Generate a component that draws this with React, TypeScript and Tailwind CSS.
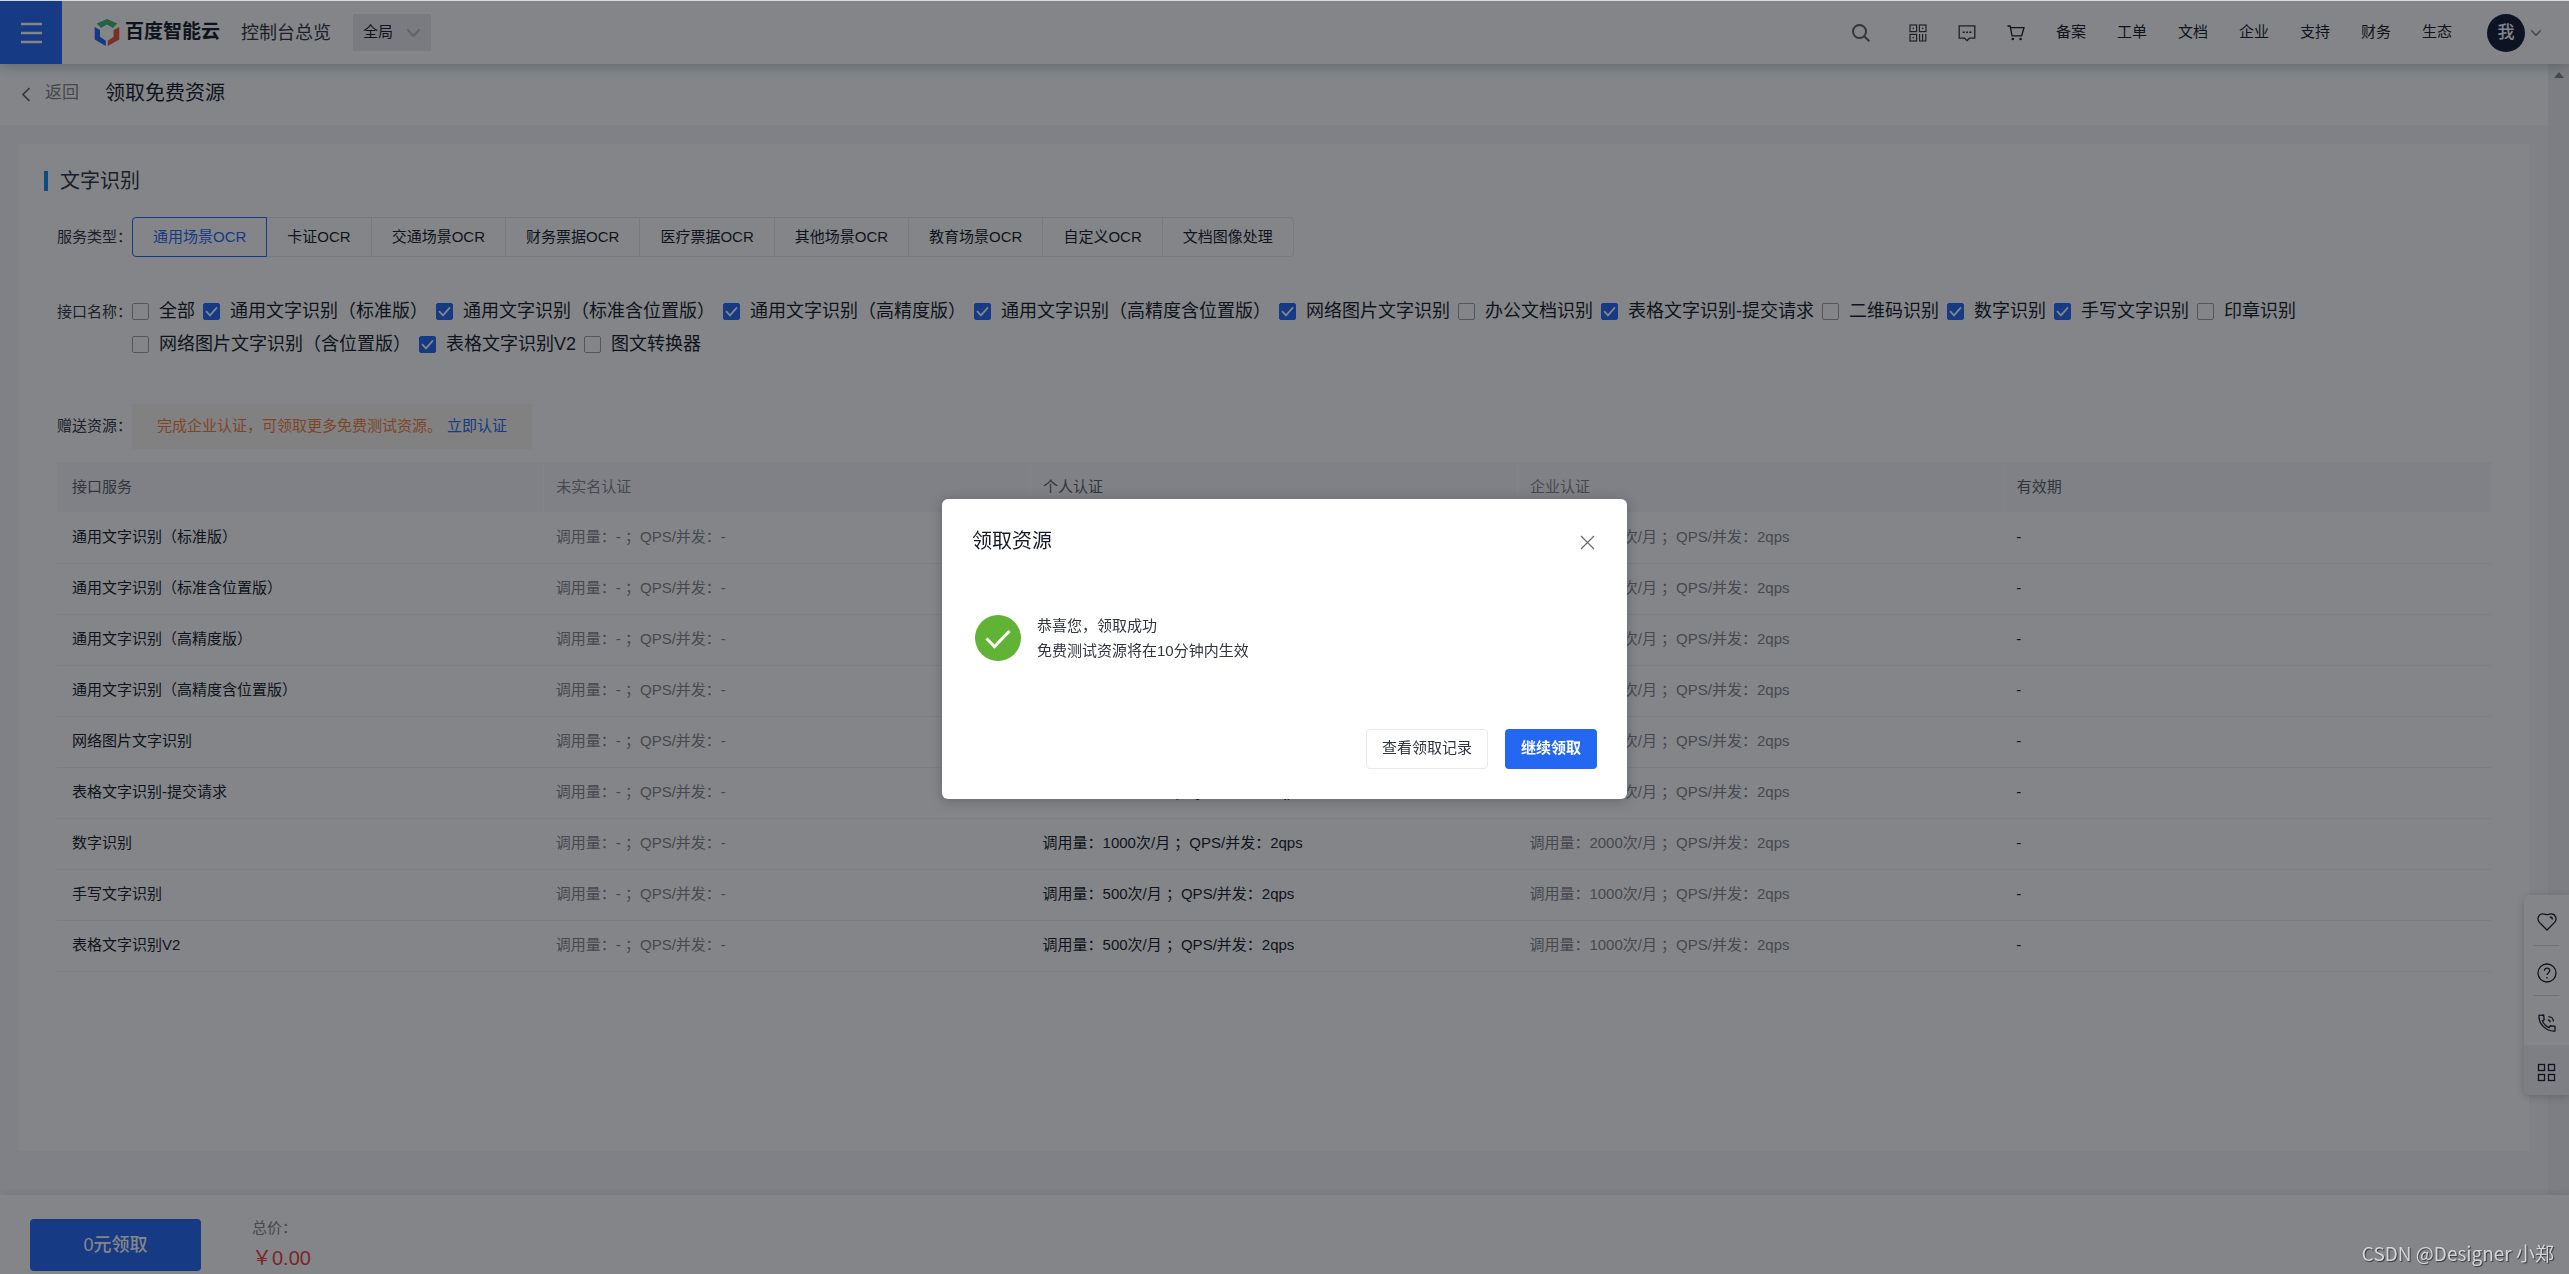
import { useState } from "react";

const navLinks = ["备案", "工单", "文档", "企业", "支持", "财务", "生态"];

const serviceTypes = [
  "通用场景OCR",
  "卡证OCR",
  "交通场景OCR",
  "财务票据OCR",
  "医疗票据OCR",
  "其他场景OCR",
  "教育场景OCR",
  "自定义OCR",
  "文档图像处理",
];

const apiOptions = [
  { name: "全部", checked: false },
  { name: "通用文字识别（标准版）", checked: true },
  { name: "通用文字识别（标准含位置版）", checked: true },
  { name: "通用文字识别（高精度版）", checked: true },
  { name: "通用文字识别（高精度含位置版）", checked: true },
  { name: "网络图片文字识别", checked: true },
  { name: "办公文档识别", checked: false },
  { name: "表格文字识别-提交请求", checked: true },
  { name: "二维码识别", checked: false },
  { name: "数字识别", checked: true },
  { name: "手写文字识别", checked: true },
  { name: "印章识别", checked: false },
  { name: "网络图片文字识别（含位置版）", checked: false },
  { name: "表格文字识别V2", checked: true },
  { name: "图文转换器", checked: false },
];

const rows = [
  { name: "通用文字识别（标准版）", personal: 1000, company: 2000 },
  { name: "通用文字识别（标准含位置版）", personal: 1000, company: 2000 },
  { name: "通用文字识别（高精度版）", personal: 1000, company: 2000 },
  { name: "通用文字识别（高精度含位置版）", personal: 500, company: 1000 },
  { name: "网络图片文字识别", personal: 1000, company: 2000 },
  { name: "表格文字识别-提交请求", personal: 1000, company: 2000 },
  { name: "数字识别", personal: 1000, company: 2000 },
  { name: "手写文字识别", personal: 500, company: 1000 },
  { name: "表格文字识别V2", personal: 500, company: 1000 },
];

const columns = [
  { title: "接口服务", color: "text-[#5c5f66]" },
  { title: "未实名认证", color: "text-[#84868c]" },
  { title: "个人认证", color: "text-[#5c5f66]" },
  { title: "企业认证", color: "text-[#84868c]" },
  { title: "有效期", color: "text-[#5c5f66]" },
];

function quota(count: number) {
  return `调用量：${count}次/月 ；QPS/并发：2qps`;
}

function Logo() {
  return (
    <svg width="26" height="28" viewBox="0 0 26 28" aria-hidden="true">
      <path d="M2.7 4.5 L13 0 L23.3 4.5 L19 9 L13 5.6 L7 9 Z" fill="#43b96e" />
      <path d="M0.7 8 L6 11 V17.8 L11.8 21.7 V27 L0.7 20.4 Z" fill="#2464f0" />
      <path d="M25.3 8 L19.6 11 V17.8 L13.8 21.7 V27 L25.3 20.4 Z" fill="#e8543c" />
    </svg>
  );
}

function SearchIcon() {
  return (
    <svg width="18" height="18" viewBox="0 0 18 18" fill="none" stroke="#5c5f66" strokeWidth="2" aria-hidden="true">
      <circle cx="7.5" cy="7.5" r="6.5" />
      <path d="M12.2 12.2 L17.3 17.3" />
    </svg>
  );
}

function QrIcon() {
  return (
    <svg width="18" height="18" viewBox="0 0 18 18" fill="none" stroke="#30343c" strokeWidth="1.2" aria-hidden="true">
      <rect x="1" y="1" width="6.6" height="6.6" />
      <rect x="10.4" y="1" width="6.6" height="6.6" />
      <rect x="1" y="10.4" width="6.6" height="6.6" />
      <path d="M3.6 4.3h1.4M13 4.3h1.4M3.6 13.7H5M10.6 10v7.2M13.6 10v7.2M16.8 10v7.2M10 17h7.4" />
    </svg>
  );
}

function MessageIcon() {
  return (
    <svg width="18" height="18" viewBox="0 0 18 18" fill="none" stroke="#30343c" strokeWidth="1.3" aria-hidden="true">
      <path d="M1.2 1.8h15.6v12.4h-5.4L9 16.6l-2.4-2.4H1.2z" />
      <path d="M4.6 8.2h2.2M8 8.2h2M11.2 8.2h2.2" strokeWidth="1.5" />
    </svg>
  );
}

function CartIcon() {
  return (
    <svg width="18" height="18" viewBox="0 0 18 18" fill="none" stroke="#151b26" strokeWidth="1.3" aria-hidden="true">
      <path d="M0.5 2h2.6l2 9.8h9.6L17 3.6H3.4" />
      <circle cx="5.8" cy="15" r="1.3" fill="#151b26" stroke="none" />
      <circle cx="13.6" cy="15" r="1.3" fill="#151b26" stroke="none" />
    </svg>
  );
}

function Chevron({ className }: { className: string }) {
  return (
    <svg className={className} viewBox="0 0 14 10" fill="none" aria-hidden="true">
      <path d="M1 1.5 L7 8 L13 1.5" stroke="currentColor" strokeWidth="2" />
    </svg>
  );
}

function Header() {
  return (
    <header className="relative z-10 flex h-16 shrink-0 items-center border-t border-[#d3dadd] bg-white shadow-[0_2px_12px_rgba(40,80,80,0.35)]">
      <button type="button" aria-label="菜单" className="flex h-[63px] w-[62px] items-center justify-center bg-[#2468f2]">
        <svg width="21" height="22" viewBox="0 0 21 22" stroke="#fff" strokeWidth="2.4" aria-hidden="true">
          <path d="M0 2h21M0 11h21M0 20h21" />
        </svg>
      </button>
      <a href="#home" className="ml-8 flex items-center gap-[5px] text-[19px] font-bold text-[#151b26]">
        <Logo />
        百度智能云
      </a>
      <a href="#overview" className="ml-[21px] text-lg text-[#303540]">
        控制台总览
      </a>
      <button type="button" className="ml-[22px] flex h-[37px] w-[78px] items-center justify-between bg-[#eaebed] pr-[10px] pl-[10px] text-[15px] text-[#151b26]">
        全局
        <Chevron className="h-[10px] w-[15px] text-[#b8babf]" />
      </button>

      <nav className="ml-auto flex items-center gap-[31px] text-[15px] text-[#151b26]">
        <a href="#search" aria-label="搜索" className="mr-2">
          <SearchIcon />
        </a>
        <a href="#qr" aria-label="二维码">
          <QrIcon />
        </a>
        <a href="#message" aria-label="消息">
          <MessageIcon />
        </a>
        <a href="#cart" aria-label="购物车">
          <CartIcon />
        </a>
        {navLinks.map((link) => (
          <a key={link} href={`#${link}`}>
            {link}
          </a>
        ))}
      </nav>
      <button type="button" className="mr-[27px] ml-[35px] flex items-center gap-[5px]">
        <span className="flex size-[38px] items-center justify-center rounded-full bg-[#131b36] text-[17px] font-medium text-white">
          我
        </span>
        <Chevron className="h-2 w-3 text-[#84868c]" />
      </button>
    </header>
  );
}

function ApiCheckbox({ name, defaultChecked }: { name: string; defaultChecked: boolean }) {
  return (
    <label className="flex items-center gap-[10px]">
      <span className="grid">
        <input
          type="checkbox"
          defaultChecked={defaultChecked}
          className="peer col-start-1 row-start-1 size-[17px] appearance-none rounded-[2px] border border-[#9fa1a6] checked:border-[#2468f2] checked:bg-[#2468f2]"
        />
        <svg
          className="pointer-events-none invisible col-start-1 row-start-1 size-[17px] peer-checked:visible"
          viewBox="0 0 17 17"
          fill="none"
          aria-hidden="true"
        >
          <path d="M3 8.2 L7 12.4 L14 4.4" stroke="#fff" strokeWidth="1.7" />
        </svg>
      </span>
      {name}
    </label>
  );
}

function ResourceTable() {
  return (
    <table className="mt-[13px] w-full table-fixed border-collapse text-left text-[15px]">
      <thead>
        <tr className="h-[50px] bg-[#f6f6f8]">
          {columns.map((col) => (
            <th key={col.title} scope="col" className={`border-l border-[#fdfdfd] px-3 font-normal first:border-l-0 first:px-[15px] ${col.color}`}>
              {col.title}
            </th>
          ))}
        </tr>
      </thead>
      <tbody>
        {rows.map((row) => (
          <tr key={row.name} className="h-[51px] border-b border-[#f0f0f3] text-[#84868c]">
            <td className="px-[15px] text-[#151b26]">{row.name}</td>
            <td className="px-3">调用量：- ；QPS/并发：-</td>
            <td className="px-3 text-[#151b26]">{quota(row.personal)}</td>
            <td className="px-3">{quota(row.company)}</td>
            <td className="px-3 text-[#151b26]">-</td>
          </tr>
        ))}
      </tbody>
    </table>
  );
}

function SideTools() {
  return (
    <aside className="fixed top-[895px] right-0 z-10 w-[45px] overflow-hidden rounded-l-md bg-white shadow-[0_2px_10px_rgba(7,12,20,0.2)]">
      <div className="px-[10px] text-[#151b26]">
        <button type="button" aria-label="收藏" className="flex h-[51px] w-full items-center justify-center border-b border-[#d4d6d9] pt-1">
          <svg width="20" height="20" viewBox="0 0 20 20" fill="none" stroke="currentColor" strokeWidth="1.3" aria-hidden="true">
            <path d="M10 18 L2.4 10.4 C-0.6 6.8 1.6 1.8 5.6 1.8 C7.6 1.8 9 2.6 10 2.6 C11 2.6 12.4 1.8 14.4 1.8 C18.4 1.8 20.6 6.8 17.6 10.4 Z" />
            <path d="M12.8 5 C14.4 5 15.4 6 15.4 7.6" />
          </svg>
        </button>
        <button type="button" aria-label="帮助" className="flex h-[50px] w-full items-center justify-center border-b border-[#d4d6d9] pt-1">
          <svg width="20" height="20" viewBox="0 0 20 20" fill="none" stroke="currentColor" strokeWidth="1.3" aria-hidden="true">
            <circle cx="10" cy="10" r="9" />
            <path d="M7.4 7.8 C7.4 4.2 12.8 4.4 12.8 7.6 C12.8 9.6 10 9.8 10 12" />
            <path d="M10 14v1.4" />
          </svg>
        </button>
        <button type="button" aria-label="电话" className="flex h-[49px] w-full items-center justify-center pt-1">
          <svg width="20" height="20" viewBox="0 0 20 20" fill="none" stroke="currentColor" strokeWidth="1.3" aria-hidden="true">
            <path d="M2 2.4 L6.6 2 L7.2 6.6 L5.4 8 C6.6 11 8.8 13.2 12 14.6 L13.4 12.8 L18 13.4 V18 C9 18.6 1.4 11 2 2.4 Z" />
            <path d="M10.8 6.8 C12.4 6.8 13.2 7.8 13.2 9.2M11.4 3.6 C14.4 3.6 16.4 5.8 16.4 8.6" />
          </svg>
        </button>
      </div>
      <button type="button" aria-label="更多" className="flex h-[50px] w-full items-center justify-center bg-[#f3f3f7] pt-1 text-[#151b26]">
        <svg width="19" height="19" viewBox="0 0 19 19" fill="none" stroke="currentColor" strokeWidth="1.3" aria-hidden="true">
          <rect x="1.5" y="1.5" width="6" height="6" />
          <rect x="11.5" y="1.5" width="6" height="6" />
          <rect x="1.5" y="11.5" width="6" height="6" />
          <rect x="11.5" y="11.5" width="6" height="6" />
        </svg>
      </button>
    </aside>
  );
}

function SuccessDialog() {
  return (
    <div className="fixed inset-x-0 top-px bottom-0 z-20 flex items-center justify-center bg-[#070c14]/50 pt-[22px]">
      <div
        role="dialog"
        aria-labelledby="dialog-title"
        className="w-[685px] rounded-md bg-white px-[30px] pt-[30px] pb-[30px] text-[15px] text-[#303540] shadow-[0_2px_12px_rgba(7,12,20,0.25)]"
      >
        <div className="flex h-6 items-center justify-between">
          <h2 id="dialog-title" className="text-xl text-[#151b26]">
            领取资源
          </h2>
          <button type="button" aria-label="关闭" className="flex size-5 items-center justify-center pt-1">
            <svg className="size-[15px]" viewBox="0 0 15 15" stroke="#6b6e75" strokeWidth="1.3" aria-hidden="true">
              <path d="M1 1 L14 14M14 1 L1 14" />
            </svg>
          </button>
        </div>
        <div className="mt-[60px] flex items-center gap-4 pl-[3px]">
          <svg width="46" height="46" viewBox="0 0 46 46" fill="none" aria-hidden="true">
            <circle cx="23" cy="23" r="23" fill="#60b334" />
            <path d="M11.5 23.5 L19.5 31.5 L34.5 16" stroke="#fff" strokeWidth="3" />
          </svg>
          <p className="leading-[25px]">
            恭喜您，领取成功
            <br />
            免费测试资源将在10分钟内生效
          </p>
        </div>
        <div className="mt-[66px] flex justify-end gap-[17px]">
          <button type="button" className="h-10 rounded border border-[#e8e9eb] bg-white px-[15px]">
            查看领取记录
          </button>
          <button type="button" className="h-10 rounded bg-[#2468f2] px-4 font-bold text-white">
            继续领取
          </button>
        </div>
      </div>
    </div>
  );
}

export default function App() {
  const [active, setActive] = useState(0);

  return (
    <div className="flex min-h-screen flex-col bg-[#f7f7f9] font-['Liberation_Sans','Noto_Sans_CJK_SC',sans-serif] leading-normal">
      <Header />

      <div className="flex flex-1">
        <main className="flex min-w-0 flex-1 flex-col">
          <div className="flex h-[61px] items-center bg-white pb-1 pl-[21px]">
            <a href="#back" className="flex items-center gap-[14px] text-[17px] text-[#84868c]">
              <svg className="mt-1 h-[15px] w-[10px]" viewBox="0 0 10 15" fill="none" stroke="#5c5f66" strokeWidth="1.7" aria-hidden="true">
                <path d="M8.5 1 L2 7.5 L8.5 14" />
              </svg>
              返回
            </a>
            <h1 className="ml-[26px] text-xl text-[#151b26]">领取免费资源</h1>
          </div>

          <section className="mx-[19px] mt-[19px] mb-11 flex-1 bg-white pt-[27px]">
            <h2 className="ml-[25px] flex h-5 items-center border-l-4 border-[#108cee] pl-3 text-xl text-[#303540]">文字识别</h2>

            <div className="px-[38px] text-[15px] text-[#303540]">
              <div className="mt-[26px] flex items-center">
                <span>服务类型：</span>
                <div className="flex">
                  {serviceTypes.map((type, i) => (
                    <button
                      key={type}
                      type="button"
                      onClick={() => setActive(i)}
                      className={`-ml-px h-10 border px-5 first:ml-0 first:rounded-l last:rounded-r ${
                        i === active ? "relative border-[#2468f2] text-[#2468f2]" : "border-[#e8e9eb] text-[#151b26]"
                      }`}
                    >
                      {type}
                    </button>
                  ))}
                </div>
              </div>

              <div className="mt-[38px] flex items-start leading-[33px]">
                <span className="shrink-0">接口名称：</span>
                <div className="flex flex-wrap gap-x-2 text-lg leading-[33px] text-[#151b26]">
                  {apiOptions.map((option) => (
                    <ApiCheckbox key={option.name} name={option.name} defaultChecked={option.checked} />
                  ))}
                </div>
              </div>

              <div className="mt-[43px] flex items-center">
                <span>赠送资源：</span>
                <p className="flex h-[45px] items-center gap-[5px] bg-[#fcf7f1] px-[25px] text-[#f37f3a]">
                  完成企业认证，可领取更多免费测试资源。
                  <a href="#verify" className="text-[#2468f2]">
                    立即认证
                  </a>
                </p>
              </div>

              <ResourceTable />
            </div>
          </section>
        </main>
        {/* scroll track */}
        <div className="flex w-[21px] shrink-0 justify-center bg-[#f0f0f2] pt-2" aria-hidden="true">
          <svg width="10" height="6" viewBox="0 0 10 6">
            <path d="M0 6 L5 0 L10 6 Z" fill="#84868c" />
          </svg>
        </div>
      </div>

      <footer className="relative flex h-[79px] shrink-0 items-start bg-white pt-6 pl-[30px] shadow-[0_-2px_8px_rgba(7,12,20,0.08)]">
        <button type="button" className="h-[52px] w-[171px] rounded bg-[#2468f2] text-lg font-medium text-white">
          0元领取
        </button>
        <div className="ml-[51px]">
          <p className="text-[15px] leading-[18px] text-[#84868c]">总价：</p>
          <p className="mt-1 text-xl leading-[34px] text-[#f33e3e]">￥0.00</p>
        </div>
      </footer>

      <SideTools />
      <SuccessDialog />
      <p className="fixed right-[15px] bottom-[7px] z-30 font-['Noto_Sans_CJK_SC',sans-serif] text-[19px] text-[#d4d5d7] [text-shadow:1px_1px_1px_rgba(0,0,0,0.6)]">
        CSDN @Designer 小郑
      </p>
    </div>
  );
}
